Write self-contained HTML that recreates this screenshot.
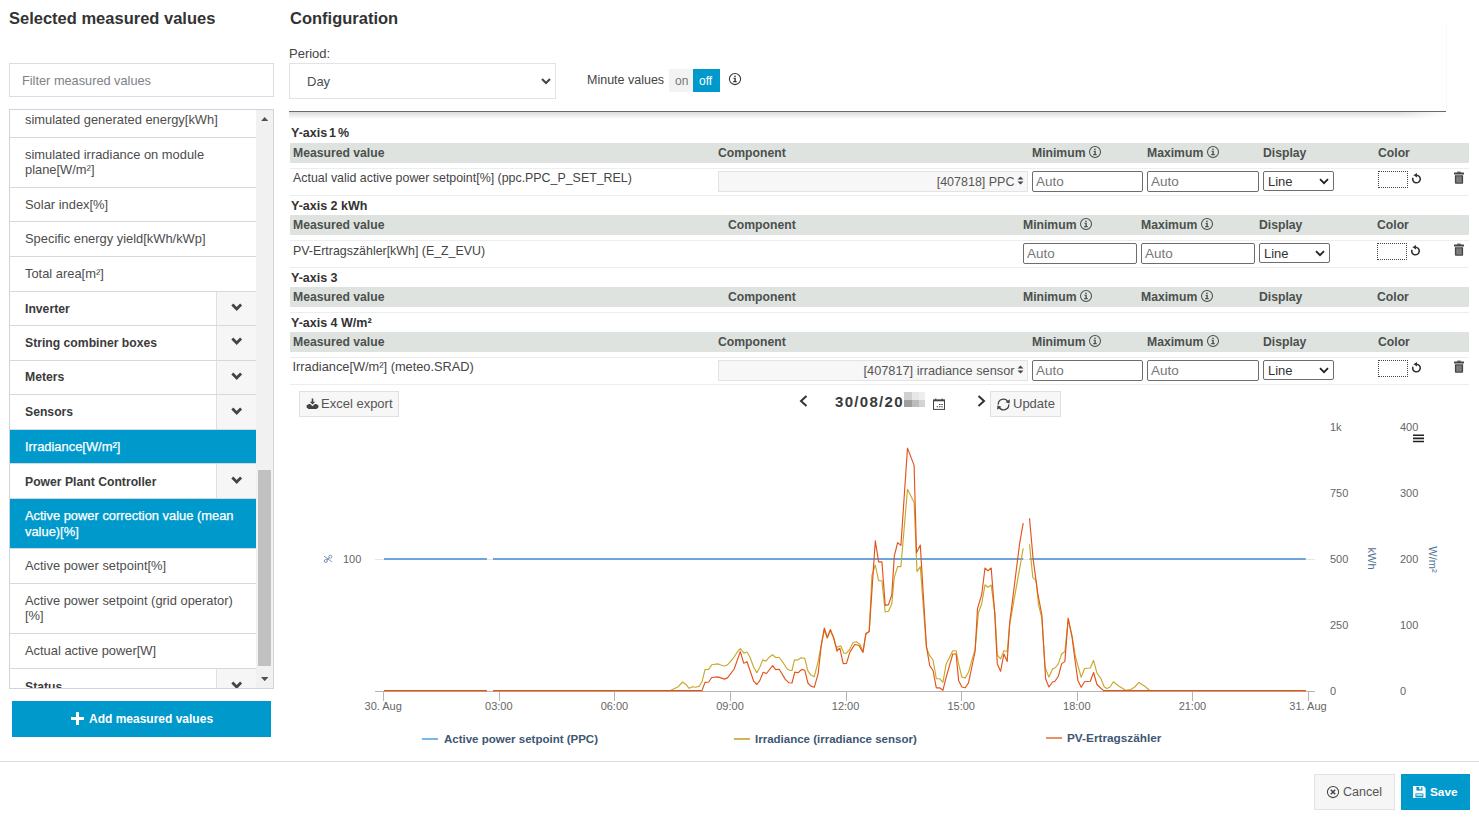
<!DOCTYPE html>
<html><head><meta charset="utf-8">
<style>
*{box-sizing:border-box;margin:0;padding:0}
html,body{width:1479px;height:819px;overflow:hidden;background:#fff}
body{font-family:"Liberation Sans",sans-serif;color:#444;position:relative}
.a{position:absolute;white-space:nowrap}
.t16{font-size:16.5px;font-weight:bold;color:#333;line-height:20px}
.lb{border:1px solid #cdd4db}
.item{position:absolute;left:10px;width:246px;border-bottom:1px solid #d3d9df;font-size:12.5px;color:#4a4a4a}
.item span{position:absolute;left:15px;line-height:16px;white-space:nowrap}
.item.b span{font-weight:bold;color:#3d3d3d}
.item.sel{background:#0099cc;color:#fff;border-bottom-color:#0099cc}
.chev{position:absolute;right:0;top:0;width:40px;bottom:0;border-left:1px solid #d8dde2;background:#f6f6f6}
.chev svg{position:absolute;left:14px;top:13px}
.hdr{position:absolute;left:290px;width:1179px;height:20px;background:#dfe3e0}
.hdr span{position:absolute;top:0;line-height:20px;font-size:12.5px;font-weight:bold;color:#4a4f4c;white-space:nowrap}
.rline{position:absolute;left:290px;width:1179px;height:1px;background:#eceeed}
.ax{font-size:12.5px;font-weight:bold;color:#3a3a3a;line-height:16px}
.cell{font-size:12.5px;color:#444;line-height:16px}
.inp{position:absolute;border:1px solid #6b6b6b;border-radius:2px;background:#fff;height:21px}
.inp span{position:absolute;left:4px;top:2px;font-size:13px;color:#8a8a8a;line-height:16px}
.dsel{position:absolute;border:1px solid #6b6b6b;border-radius:2px;background:#fff;height:20px;width:71px}
.dsel span{position:absolute;left:5px;top:1px;font-size:13px;color:#333;line-height:16px}
.dsel svg{position:absolute;right:8px;top:6px}
.csel{position:absolute;border:1px solid #e2e2e2;background:#f7f7f7;height:21px}
.csel span{position:absolute;right:14px;top:2px;font-size:12.5px;color:#555;line-height:16px}
.csel svg{position:absolute;right:3px;top:5px}
.cbox{position:absolute;width:30px;height:17px;border:1px dotted #333}
.info{position:absolute;width:12px;height:12px}
.lg{font-size:12px;font-weight:bold;color:#3f5773;line-height:16px}
.tk{font-size:11px;color:#666;line-height:13px}
</style></head><body>

<!-- LEFT PANEL -->
<div class="a t16" id="t_left" style="left:9px;top:8px">Selected measured values</div>
<div class="a lb" style="left:9px;top:63px;width:265px;height:34px;border-color:#d9dee2"></div>
<div class="a" id="t_filter" style="left:22px;top:73px;font-size:12.75px;color:#7b8288;line-height:16px">Filter measured values</div>

<div class="a lb" style="left:9px;top:109px;width:265px;height:580px;overflow:hidden">
</div>
<div class="a" style="left:10px;top:110px;width:263px;height:578px;overflow:hidden">
  <div style="position:absolute;left:0;top:0;width:263px;height:578px">
  <div style="position:absolute;left:15px;top:2.23px;font-size:12.9px;color:#4d4d4d;line-height:16px;white-space:nowrap">simulated generated energy[kWh]</div>
<div style="position:absolute;left:15px;top:36.83px;font-size:12.9px;color:#4d4d4d;line-height:16px;white-space:nowrap">simulated irradiance on module</div>
<div style="position:absolute;left:15px;top:52.43px;font-size:12.9px;color:#4d4d4d;line-height:16px;white-space:nowrap">plane[W/m²]</div>
<div style="position:absolute;left:15px;top:86.83px;font-size:12.9px;color:#4d4d4d;line-height:16px;white-space:nowrap">Solar index[%]</div>
<div style="position:absolute;left:15px;top:121.23px;font-size:12.9px;color:#4d4d4d;line-height:16px;white-space:nowrap">Specific energy yield[kWh/kWp]</div>
<div style="position:absolute;left:15px;top:155.73px;font-size:12.9px;color:#4d4d4d;line-height:16px;white-space:nowrap">Total area[m²]</div>
<div style="position:absolute;left:206px;top:181.8px;width:40px;height:33.5px;background:#f6f6f6;border-left:1px solid #dde1e5"></div>
<svg style="position:absolute;left:220.8px;top:193.2px" width="12" height="9" viewBox="0 0 12 9"><path d="M1.3 1.6L5.7 6 10.1 1.6" stroke="#444" stroke-width="2.8" fill="none"/></svg>
<div style="position:absolute;left:15px;top:190.97px;font-size:12.2px;font-weight:bold;color:#3b3b3b;line-height:16px;white-space:nowrap">Inverter</div>
<div style="position:absolute;left:206px;top:215.3px;width:40px;height:34.8px;background:#f6f6f6;border-left:1px solid #dde1e5"></div>
<svg style="position:absolute;left:220.8px;top:227.3px" width="12" height="9" viewBox="0 0 12 9"><path d="M1.3 1.6L5.7 6 10.1 1.6" stroke="#444" stroke-width="2.8" fill="none"/></svg>
<div style="position:absolute;left:15px;top:224.97px;font-size:12.2px;font-weight:bold;color:#3b3b3b;line-height:16px;white-space:nowrap">String combiner boxes</div>
<div style="position:absolute;left:206px;top:250.1px;width:40px;height:34.4px;background:#f6f6f6;border-left:1px solid #dde1e5"></div>
<svg style="position:absolute;left:220.8px;top:261.9px" width="12" height="9" viewBox="0 0 12 9"><path d="M1.3 1.6L5.7 6 10.1 1.6" stroke="#444" stroke-width="2.8" fill="none"/></svg>
<div style="position:absolute;left:15px;top:259.47px;font-size:12.2px;font-weight:bold;color:#3b3b3b;line-height:16px;white-space:nowrap">Meters</div>
<div style="position:absolute;left:206px;top:284.5px;width:40px;height:35.4px;background:#f6f6f6;border-left:1px solid #dde1e5"></div>
<svg style="position:absolute;left:220.8px;top:296.8px" width="12" height="9" viewBox="0 0 12 9"><path d="M1.3 1.6L5.7 6 10.1 1.6" stroke="#444" stroke-width="2.8" fill="none"/></svg>
<div style="position:absolute;left:15px;top:294.37px;font-size:12.2px;font-weight:bold;color:#3b3b3b;line-height:16px;white-space:nowrap">Sensors</div>
<div style="position:absolute;left:0;top:320.4px;width:246px;height:33.9px;background:#0099cc"></div>
<div style="position:absolute;left:15px;top:329.13px;font-size:12.9px;font-weight:normal;-webkit-text-stroke:0.25px #fff;color:#fff;line-height:16px;white-space:nowrap">Irradiance[W/m²]</div>
<div style="position:absolute;left:206px;top:353.8px;width:40px;height:35.0px;background:#f6f6f6;border-left:1px solid #dde1e5"></div>
<svg style="position:absolute;left:220.8px;top:365.9px" width="12" height="9" viewBox="0 0 12 9"><path d="M1.3 1.6L5.7 6 10.1 1.6" stroke="#444" stroke-width="2.8" fill="none"/></svg>
<div style="position:absolute;left:15px;top:363.97px;font-size:12.2px;font-weight:bold;color:#3b3b3b;line-height:16px;white-space:nowrap">Power Plant Controller</div>
<div style="position:absolute;left:0;top:389.3px;width:246px;height:49.2px;background:#0099cc"></div>
<div style="position:absolute;left:15px;top:398.23px;font-size:12.9px;font-weight:normal;-webkit-text-stroke:0.25px #fff;color:#fff;line-height:16px;white-space:nowrap">Active power correction value (mean</div>
<div style="position:absolute;left:15px;top:413.73px;font-size:12.9px;font-weight:normal;-webkit-text-stroke:0.25px #fff;color:#fff;line-height:16px;white-space:nowrap">value)[%]</div>
<div style="position:absolute;left:15px;top:448.03px;font-size:12.9px;color:#4d4d4d;line-height:16px;white-space:nowrap">Active power setpoint[%]</div>
<div style="position:absolute;left:15px;top:482.73px;font-size:12.9px;color:#4d4d4d;line-height:16px;white-space:nowrap">Active power setpoint (grid operator)</div>
<div style="position:absolute;left:15px;top:498.23px;font-size:12.9px;color:#4d4d4d;line-height:16px;white-space:nowrap">[%]</div>
<div style="position:absolute;left:15px;top:532.73px;font-size:12.9px;color:#4d4d4d;line-height:16px;white-space:nowrap">Actual active power[W]</div>
<div style="position:absolute;left:206px;top:558.2px;width:40px;height:35.8px;background:#f6f6f6;border-left:1px solid #dde1e5"></div>
<svg style="position:absolute;left:220.8px;top:570.7px" width="12" height="9" viewBox="0 0 12 9"><path d="M1.3 1.6L5.7 6 10.1 1.6" stroke="#444" stroke-width="2.8" fill="none"/></svg>
<div style="position:absolute;left:15px;top:568.97px;font-size:12.2px;font-weight:bold;color:#3b3b3b;line-height:16px;white-space:nowrap">Status</div>
<div style="position:absolute;left:0;top:27.0px;width:246px;height:1px;background:#d3d9df"></div>
<div style="position:absolute;left:0;top:76.9px;width:246px;height:1px;background:#d3d9df"></div>
<div style="position:absolute;left:0;top:110.7px;width:246px;height:1px;background:#d3d9df"></div>
<div style="position:absolute;left:0;top:146.1px;width:246px;height:1px;background:#d3d9df"></div>
<div style="position:absolute;left:0;top:181.3px;width:246px;height:1px;background:#d3d9df"></div>
<div style="position:absolute;left:0;top:214.8px;width:246px;height:1px;background:#d3d9df"></div>
<div style="position:absolute;left:0;top:249.6px;width:246px;height:1px;background:#d3d9df"></div>
<div style="position:absolute;left:0;top:284.0px;width:246px;height:1px;background:#d3d9df"></div>
<div style="position:absolute;left:0;top:319.4px;width:246px;height:1px;background:#d3d9df"></div>
<div style="position:absolute;left:0;top:353.3px;width:246px;height:1px;background:#d3d9df"></div>
<div style="position:absolute;left:0;top:388.3px;width:246px;height:1px;background:#d3d9df"></div>
<div style="position:absolute;left:0;top:437.5px;width:246px;height:1px;background:#d3d9df"></div>
<div style="position:absolute;left:0;top:472.5px;width:246px;height:1px;background:#d3d9df"></div>
<div style="position:absolute;left:0;top:522.5px;width:246px;height:1px;background:#d3d9df"></div>
<div style="position:absolute;left:0;top:557.7px;width:246px;height:1px;background:#d3d9df"></div>
<div style="position:absolute;left:246px;top:0;width:17px;height:578px;background:#f1f1f1"></div>
<div style="position:absolute;left:248px;top:360px;width:13px;height:196px;background:#c1c1c1"></div>
<svg style="position:absolute;left:250.8px;top:6.8px" width="7.4" height="4.2" viewBox="0 0 7.4 4.2"><path d="M0 4.2L3.7 0 7.4 4.2z" fill="#505050"/></svg>
<svg style="position:absolute;left:250.8px;top:567px" width="7.4" height="4.2" viewBox="0 0 7.4 4.2"><path d="M0 0L3.7 4.2 7.4 0z" fill="#505050"/></svg>
  </div>
</div>

<div class="a" style="left:12px;top:701px;width:259px;height:36px;background:#0099cc"></div>
<svg class="a" style="left:71px;top:712px" width="13" height="13" viewBox="0 0 13 13"><path d="M5 0h3v5h5v3H8v5H5V8H0V5h5z" fill="#fff"/></svg>
<div class="a" id="t_add" style="left:89px;top:711px;font-size:12px;font-weight:bold;color:#fff;line-height:16px">Add measured values</div>

<!-- CONFIG -->
<div class="a t16" id="t_conf" style="left:290px;top:8px">Configuration</div>
<div class="a" id="t_period" style="left:289px;top:46px;font-size:13px;color:#444;line-height:16px">Period:</div>
<div class="a" style="left:289px;top:63px;width:267px;height:36px;border:1px solid #e3e3e3"></div>
<div class="a" id="t_day" style="left:307px;top:74px;font-size:13px;color:#4a5056;line-height:16px">Day</div>
<svg class="a" style="left:541px;top:78px" width="10" height="7" viewBox="0 0 10 7"><path d="M1 1l4 4 4-4" stroke="#3a434e" stroke-width="2" fill="none"/></svg>
<div class="a" id="t_minute" style="left:587px;top:72px;font-size:12.5px;color:#444;line-height:16px">Minute values</div>
<div class="a" style="left:669px;top:69px;width:24px;height:23px;background:#f3f3f3"></div>
<div class="a" style="left:675px;top:73px;font-size:12px;color:#777;line-height:16px">on</div>
<div class="a" style="left:693px;top:69px;width:27px;height:23px;background:#0099cc"></div>
<div class="a" style="left:699px;top:73px;font-size:12px;color:#fff;line-height:16px">off</div>
<svg class="a" style="left:728px;top:71.8px" width="14" height="14" viewBox="-7 -7 14 14"><circle cx="0" cy="0" r="5.6" fill="none" stroke="#333" stroke-width="1.05"/><path d="M-1 -3.3H0.9V-2.2H-1z" fill="#333"/><path d="M-1.5 -1.2H0.8V2.1H1.7V3.2H-1.8V2.1H-0.6V-0.2H-1.5z" fill="#333"/></svg>

<div class="a" style="left:289px;top:112px;width:1157px;height:7px;background:linear-gradient(rgba(0,0,0,.14),rgba(0,0,0,0));-webkit-mask-image:linear-gradient(90deg,#000 96%,transparent)"></div>
<div class="a" style="left:289px;top:111px;width:1157px;height:1px;background:#6a6a6a"></div>

<div class="a" style="left:291px;top:124.67px;font-size:12.5px;font-weight:bold;color:#333;line-height:16px;word-spacing:-1.5px">Y-axis 1 %</div>
<div class="a" style="left:290px;top:143px;width:1179px;height:20px;background:#dfe3e0"></div>
<div class="a" style="left:293px;top:144.97px;font-size:12.2px;font-weight:bold;color:#4b504d;line-height:16px;">Measured value</div>
<div class="a" style="left:718px;top:144.97px;font-size:12.2px;font-weight:bold;color:#4b504d;line-height:16px;">Component</div>
<div class="a" style="left:1032px;top:144.97px;font-size:12.2px;font-weight:bold;color:#4b504d;line-height:16px;">Minimum</div>
<div class="a" style="left:1147px;top:144.97px;font-size:12.2px;font-weight:bold;color:#4b504d;line-height:16px;">Maximum</div>
<div class="a" style="left:1263px;top:144.97px;font-size:12.2px;font-weight:bold;color:#4b504d;line-height:16px;">Display</div>
<div class="a" style="left:1378px;top:144.97px;font-size:12.2px;font-weight:bold;color:#4b504d;line-height:16px;">Color</div>
<svg class="a" style="left:1088px;top:144.7px" width="14" height="14" viewBox="-7 -7 14 14"><circle cx="0" cy="0" r="5.5" fill="none" stroke="#4b504d" stroke-width="1.05"/><path d="M-1 -3.3H0.9V-2.2H-1z" fill="#4b504d"/><path d="M-1.5 -1.2H0.8V2.1H1.7V3.2H-1.8V2.1H-0.6V-0.2H-1.5z" fill="#4b504d"/></svg>
<svg class="a" style="left:1206px;top:144.7px" width="14" height="14" viewBox="-7 -7 14 14"><circle cx="0" cy="0" r="5.5" fill="none" stroke="#4b504d" stroke-width="1.05"/><path d="M-1 -3.3H0.9V-2.2H-1z" fill="#4b504d"/><path d="M-1.5 -1.2H0.8V2.1H1.7V3.2H-1.8V2.1H-0.6V-0.2H-1.5z" fill="#4b504d"/></svg>
<div class="a" style="left:290px;top:168px;width:1179px;height:1px;background:#eceeed"></div>
<div class="a" style="left:290px;top:195px;width:1179px;height:1px;background:#eceeed"></div>
<div class="a" style="left:291px;top:197.67px;font-size:12.5px;font-weight:bold;color:#333;line-height:16px;">Y-axis 2 kWh</div>
<div class="a" style="left:290px;top:215px;width:1179px;height:20px;background:#dfe3e0"></div>
<div class="a" style="left:293px;top:216.97px;font-size:12.2px;font-weight:bold;color:#4b504d;line-height:16px;">Measured value</div>
<div class="a" style="left:728px;top:216.97px;font-size:12.2px;font-weight:bold;color:#4b504d;line-height:16px;">Component</div>
<div class="a" style="left:1023px;top:216.97px;font-size:12.2px;font-weight:bold;color:#4b504d;line-height:16px;">Minimum</div>
<div class="a" style="left:1141px;top:216.97px;font-size:12.2px;font-weight:bold;color:#4b504d;line-height:16px;">Maximum</div>
<div class="a" style="left:1259px;top:216.97px;font-size:12.2px;font-weight:bold;color:#4b504d;line-height:16px;">Display</div>
<div class="a" style="left:1377px;top:216.97px;font-size:12.2px;font-weight:bold;color:#4b504d;line-height:16px;">Color</div>
<svg class="a" style="left:1079px;top:216.7px" width="14" height="14" viewBox="-7 -7 14 14"><circle cx="0" cy="0" r="5.5" fill="none" stroke="#4b504d" stroke-width="1.05"/><path d="M-1 -3.3H0.9V-2.2H-1z" fill="#4b504d"/><path d="M-1.5 -1.2H0.8V2.1H1.7V3.2H-1.8V2.1H-0.6V-0.2H-1.5z" fill="#4b504d"/></svg>
<svg class="a" style="left:1200px;top:216.7px" width="14" height="14" viewBox="-7 -7 14 14"><circle cx="0" cy="0" r="5.5" fill="none" stroke="#4b504d" stroke-width="1.05"/><path d="M-1 -3.3H0.9V-2.2H-1z" fill="#4b504d"/><path d="M-1.5 -1.2H0.8V2.1H1.7V3.2H-1.8V2.1H-0.6V-0.2H-1.5z" fill="#4b504d"/></svg>
<div class="a" style="left:290px;top:240px;width:1179px;height:1px;background:#eceeed"></div>
<div class="a" style="left:290px;top:267px;width:1179px;height:1px;background:#eceeed"></div>
<div class="a" style="left:291px;top:269.67px;font-size:12.5px;font-weight:bold;color:#333;line-height:16px;">Y-axis 3</div>
<div class="a" style="left:290px;top:287px;width:1179px;height:20px;background:#dfe3e0"></div>
<div class="a" style="left:293px;top:288.97px;font-size:12.2px;font-weight:bold;color:#4b504d;line-height:16px;">Measured value</div>
<div class="a" style="left:728px;top:288.97px;font-size:12.2px;font-weight:bold;color:#4b504d;line-height:16px;">Component</div>
<div class="a" style="left:1023px;top:288.97px;font-size:12.2px;font-weight:bold;color:#4b504d;line-height:16px;">Minimum</div>
<div class="a" style="left:1141px;top:288.97px;font-size:12.2px;font-weight:bold;color:#4b504d;line-height:16px;">Maximum</div>
<div class="a" style="left:1259px;top:288.97px;font-size:12.2px;font-weight:bold;color:#4b504d;line-height:16px;">Display</div>
<div class="a" style="left:1377px;top:288.97px;font-size:12.2px;font-weight:bold;color:#4b504d;line-height:16px;">Color</div>
<svg class="a" style="left:1079px;top:288.7px" width="14" height="14" viewBox="-7 -7 14 14"><circle cx="0" cy="0" r="5.5" fill="none" stroke="#4b504d" stroke-width="1.05"/><path d="M-1 -3.3H0.9V-2.2H-1z" fill="#4b504d"/><path d="M-1.5 -1.2H0.8V2.1H1.7V3.2H-1.8V2.1H-0.6V-0.2H-1.5z" fill="#4b504d"/></svg>
<svg class="a" style="left:1200px;top:288.7px" width="14" height="14" viewBox="-7 -7 14 14"><circle cx="0" cy="0" r="5.5" fill="none" stroke="#4b504d" stroke-width="1.05"/><path d="M-1 -3.3H0.9V-2.2H-1z" fill="#4b504d"/><path d="M-1.5 -1.2H0.8V2.1H1.7V3.2H-1.8V2.1H-0.6V-0.2H-1.5z" fill="#4b504d"/></svg>
<div class="a" style="left:290px;top:312px;width:1179px;height:1px;background:#eceeed"></div>
<div class="a" style="left:291px;top:314.67px;font-size:12.5px;font-weight:bold;color:#333;line-height:16px;">Y-axis 4 W/m²</div>
<div class="a" style="left:290px;top:332px;width:1179px;height:20px;background:#dfe3e0"></div>
<div class="a" style="left:293px;top:333.97px;font-size:12.2px;font-weight:bold;color:#4b504d;line-height:16px;">Measured value</div>
<div class="a" style="left:718px;top:333.97px;font-size:12.2px;font-weight:bold;color:#4b504d;line-height:16px;">Component</div>
<div class="a" style="left:1032px;top:333.97px;font-size:12.2px;font-weight:bold;color:#4b504d;line-height:16px;">Minimum</div>
<div class="a" style="left:1147px;top:333.97px;font-size:12.2px;font-weight:bold;color:#4b504d;line-height:16px;">Maximum</div>
<div class="a" style="left:1263px;top:333.97px;font-size:12.2px;font-weight:bold;color:#4b504d;line-height:16px;">Display</div>
<div class="a" style="left:1378px;top:333.97px;font-size:12.2px;font-weight:bold;color:#4b504d;line-height:16px;">Color</div>
<svg class="a" style="left:1088px;top:333.7px" width="14" height="14" viewBox="-7 -7 14 14"><circle cx="0" cy="0" r="5.5" fill="none" stroke="#4b504d" stroke-width="1.05"/><path d="M-1 -3.3H0.9V-2.2H-1z" fill="#4b504d"/><path d="M-1.5 -1.2H0.8V2.1H1.7V3.2H-1.8V2.1H-0.6V-0.2H-1.5z" fill="#4b504d"/></svg>
<svg class="a" style="left:1206px;top:333.7px" width="14" height="14" viewBox="-7 -7 14 14"><circle cx="0" cy="0" r="5.5" fill="none" stroke="#4b504d" stroke-width="1.05"/><path d="M-1 -3.3H0.9V-2.2H-1z" fill="#4b504d"/><path d="M-1.5 -1.2H0.8V2.1H1.7V3.2H-1.8V2.1H-0.6V-0.2H-1.5z" fill="#4b504d"/></svg>
<div class="a" style="left:290px;top:357px;width:1179px;height:1px;background:#eceeed"></div>
<div class="a" style="left:290px;top:384px;width:1179px;height:1px;background:#eceeed"></div>
<div class="a" style="left:293px;top:170.40px;font-size:12.4px;color:#444;line-height:16px;">Actual valid active power setpoint[%] (ppc.PPC_P_SET_REL)</div>
<div class="a" style="left:718px;top:171px;width:310px;height:21px;background:#f7f7f7;border:1px solid #e3e3e3"></div>
<div class="a" style="right:464.5px;top:173.5px;font-size:12.5px;color:#555;line-height:16px;text-align:right">[407818] PPC</div>
<svg class="a" style="left:1017px;top:176px" width="7" height="9" viewBox="0 0 7 9"><path d="M0.5 3.5L3.5 0.5 6.5 3.5zM0.5 5.5L3.5 8.5 6.5 5.5z" fill="#444"/></svg>
<div class="a" style="left:1032px;top:171px;width:111px;height:21px;border:1px solid #6d6d6d;border-radius:2px"></div>
<div class="a" style="left:1036px;top:173.92px;font-size:13.5px;color:#777;line-height:16px;">Auto</div>
<div class="a" style="left:1147px;top:171px;width:112px;height:21px;border:1px solid #6d6d6d;border-radius:2px"></div>
<div class="a" style="left:1151px;top:173.92px;font-size:13.5px;color:#777;line-height:16px;">Auto</div>
<div class="a" style="left:1263px;top:171px;width:71px;height:20px;border:1px solid #6d6d6d;border-radius:2px"></div>
<div class="a" style="left:1268px;top:173.50px;font-size:13px;color:#333;line-height:16px;">Line</div>
<svg class="a" style="left:1319px;top:178px" width="10" height="7" viewBox="0 0 10 7"><path d="M1 1.2l4 4 4-4" stroke="#222" stroke-width="1.8" fill="none"/></svg>
<div class="a" style="left:1378px;top:171px;width:30px;height:17px;border:1px dotted #444"></div>
<svg class="a" style="left:1411px;top:172px" width="11" height="13" viewBox="0 0 11 13"><path d="M5.5 3.2A3.8 3.8 0 1 1 1.9 5.7" stroke="#333" stroke-width="1.6" fill="none"/><path d="M2.4 3.2L6 0.9V5.5z" fill="#333"/></svg>
<svg class="a" style="left:1454px;top:171px" width="10" height="13" viewBox="0 0 10 13"><path d="M3.3 0.6h3.4v1.2H3.3z" fill="#444"/><rect x="0" y="1.6" width="10" height="1.9" rx="0.5" fill="#444"/><path d="M0.9 4.2h8.2v7.6a1 1 0 0 1-1 1H1.9a1 1 0 0 1-1-1z" fill="#444"/><path d="M3.1 5.4v6.2M5 5.4v6.2M6.9 5.4v6.2" stroke="#c8c8c8" stroke-width="0.8"/></svg>
<div class="a" style="left:293px;top:242.80px;font-size:12.4px;color:#444;line-height:16px;">PV-Ertragszähler[kWh] (E_Z_EVU)</div>
<div class="a" style="left:1023px;top:243px;width:114px;height:21px;border:1px solid #6d6d6d;border-radius:2px"></div>
<div class="a" style="left:1027px;top:245.92px;font-size:13.5px;color:#777;line-height:16px;">Auto</div>
<div class="a" style="left:1141px;top:243px;width:114px;height:21px;border:1px solid #6d6d6d;border-radius:2px"></div>
<div class="a" style="left:1145px;top:245.92px;font-size:13.5px;color:#777;line-height:16px;">Auto</div>
<div class="a" style="left:1259px;top:243px;width:71px;height:20px;border:1px solid #6d6d6d;border-radius:2px"></div>
<div class="a" style="left:1264px;top:245.50px;font-size:13px;color:#333;line-height:16px;">Line</div>
<svg class="a" style="left:1315px;top:250px" width="10" height="7" viewBox="0 0 10 7"><path d="M1 1.2l4 4 4-4" stroke="#222" stroke-width="1.8" fill="none"/></svg>
<div class="a" style="left:1377px;top:243px;width:30px;height:17px;border:1px dotted #444"></div>
<svg class="a" style="left:1410px;top:244px" width="11" height="13" viewBox="0 0 11 13"><path d="M5.5 3.2A3.8 3.8 0 1 1 1.9 5.7" stroke="#333" stroke-width="1.6" fill="none"/><path d="M2.4 3.2L6 0.9V5.5z" fill="#333"/></svg>
<svg class="a" style="left:1454px;top:243px" width="10" height="13" viewBox="0 0 10 13"><path d="M3.3 0.6h3.4v1.2H3.3z" fill="#444"/><rect x="0" y="1.6" width="10" height="1.9" rx="0.5" fill="#444"/><path d="M0.9 4.2h8.2v7.6a1 1 0 0 1-1 1H1.9a1 1 0 0 1-1-1z" fill="#444"/><path d="M3.1 5.4v6.2M5 5.4v6.2M6.9 5.4v6.2" stroke="#c8c8c8" stroke-width="0.8"/></svg>
<div class="a" style="left:292.5px;top:359.26px;font-size:12.8px;color:#444;line-height:16px;">Irradiance[W/m²] (meteo.SRAD)</div>
<div class="a" style="left:718px;top:360px;width:310px;height:21px;background:#f7f7f7;border:1px solid #e3e3e3"></div>
<div class="a" style="right:464.5px;top:362.5px;font-size:12.75px;color:#555;line-height:16px;text-align:right">[407817] irradiance sensor</div>
<svg class="a" style="left:1017px;top:365px" width="7" height="9" viewBox="0 0 7 9"><path d="M0.5 3.5L3.5 0.5 6.5 3.5zM0.5 5.5L3.5 8.5 6.5 5.5z" fill="#444"/></svg>
<div class="a" style="left:1032px;top:360px;width:111px;height:21px;border:1px solid #6d6d6d;border-radius:2px"></div>
<div class="a" style="left:1036px;top:362.92px;font-size:13.5px;color:#777;line-height:16px;">Auto</div>
<div class="a" style="left:1147px;top:360px;width:112px;height:21px;border:1px solid #6d6d6d;border-radius:2px"></div>
<div class="a" style="left:1151px;top:362.92px;font-size:13.5px;color:#777;line-height:16px;">Auto</div>
<div class="a" style="left:1263px;top:360px;width:71px;height:20px;border:1px solid #6d6d6d;border-radius:2px"></div>
<div class="a" style="left:1268px;top:362.50px;font-size:13px;color:#333;line-height:16px;">Line</div>
<svg class="a" style="left:1319px;top:367px" width="10" height="7" viewBox="0 0 10 7"><path d="M1 1.2l4 4 4-4" stroke="#222" stroke-width="1.8" fill="none"/></svg>
<div class="a" style="left:1378px;top:360px;width:30px;height:17px;border:1px dotted #444"></div>
<svg class="a" style="left:1411px;top:361px" width="11" height="13" viewBox="0 0 11 13"><path d="M5.5 3.2A3.8 3.8 0 1 1 1.9 5.7" stroke="#333" stroke-width="1.6" fill="none"/><path d="M2.4 3.2L6 0.9V5.5z" fill="#333"/></svg>
<svg class="a" style="left:1454px;top:360px" width="10" height="13" viewBox="0 0 10 13"><path d="M3.3 0.6h3.4v1.2H3.3z" fill="#444"/><rect x="0" y="1.6" width="10" height="1.9" rx="0.5" fill="#444"/><path d="M0.9 4.2h8.2v7.6a1 1 0 0 1-1 1H1.9a1 1 0 0 1-1-1z" fill="#444"/><path d="M3.1 5.4v6.2M5 5.4v6.2M6.9 5.4v6.2" stroke="#c8c8c8" stroke-width="0.8"/></svg>

<div class="a" style="left:1446px;top:22px;width:1px;height:89px;background:#f9f9f9"></div>
<!-- toolbar -->
<div class="a" style="left:299px;top:391px;width:100px;height:26px;background:#f7f7f7;border:1px solid #e0e0e0"></div>
<svg class="a" style="left:306px;top:398px" width="13" height="12" viewBox="0 0 13 12"><path d="M6.5 0.5v5" stroke="#444" stroke-width="1.6"/><path d="M3.8 3.8L6.5 6.6 9.2 3.8z" fill="#444"/><path d="M0.6 7.2L3 6h1.2L6.5 8.2 8.8 6H10l2.4 1.2v2.2L10.5 11h-8L0.6 9.4z" fill="#444"/></svg>
<div class="a" id="t_excel" style="left:321px;top:396px;font-size:13px;color:#555;line-height:16px">Excel export</div>
<svg class="a" style="left:799px;top:395px" width="9" height="12" viewBox="0 0 9 12"><path d="M7.5 1L2 6l5.5 5" stroke="#333" stroke-width="2" fill="none"/></svg>
<div class="a" id="t_date" style="left:835px;top:393px;font-size:15px;font-weight:bold;color:#3a3a3a;line-height:18px;letter-spacing:1.3px">30/08/20</div>
<div class="a" style="left:904px;top:392px;width:8px;height:8px;background:#d0d0d0"></div>
<div class="a" style="left:912px;top:392px;width:7px;height:8px;background:#e7e7e7"></div>
<div class="a" style="left:919px;top:392px;width:6px;height:8px;background:#eeeeee"></div>
<div class="a" style="left:904px;top:400px;width:8px;height:7px;background:#9e9e9e"></div>
<div class="a" style="left:912px;top:400px;width:7px;height:7px;background:#bcbcbc"></div>
<div class="a" style="left:919px;top:400px;width:6px;height:7px;background:#d3d3d3"></div>
<svg class="a" style="left:933px;top:397.8px" width="12" height="12" viewBox="0 0 12 12"><rect x="0.5" y="1.9" width="11" height="9.5" fill="none" stroke="#444" stroke-width="1"/><path d="M0.5 1.9h11v1.4H0.5z" fill="#444"/><path d="M2.2 0.4h1.1v1.8H2.2zM8.7 0.4h1.1v1.8H8.7z" fill="#444"/><path d="M6 6h1.5v1H6zM8.3 6h1.5v1H8.3zM3.7 8.3h1.5v1H3.7zM6 8.3h1.5v1H6zM8.3 8.3h1.5v1H8.3z" fill="#444"/></svg>
<svg class="a" style="left:977px;top:395px" width="9" height="12" viewBox="0 0 9 12"><path d="M1.5 1L7 6l-5.5 5" stroke="#333" stroke-width="2" fill="none"/></svg>
<div class="a" style="left:990px;top:391px;width:71px;height:26px;background:#f7f7f7;border:1px solid #e0e0e0"></div>
<svg class="a" style="left:996.5px;top:397.5px" width="14" height="13" viewBox="0 0 14 13"><path d="M1.3 6.6A5.1 5.1 0 0 1 10.9 3.9" stroke="#444" stroke-width="1.3" fill="none"/><path d="M12.9 1.2L12.6 5.6 8.6 4.3z" fill="#444"/><path d="M11.7 6.4A5.1 5.1 0 0 1 2.1 9.1" stroke="#444" stroke-width="1.3" fill="none"/><path d="M0.1 11.8L0.4 7.4 4.4 8.7z" fill="#444"/></svg>
<div class="a" id="t_upd" style="left:1013px;top:396px;font-size:13px;color:#555;line-height:16px">Update</div>

<!-- <polyline points="384,690.6 486.9,690.6" class="yl"/>
<polyline points="493,690.6 670.3,690.6 674.6,688.5 678.3,686.7 682.5,682.0 686.2,684.8 689.2,688.3 692.3,686.7 695.3,687.3 698.9,686.4 702.0,681.8 705.0,669.6 708.7,669.4 711.7,664.8 717.8,663.9 720.8,665.0 724.5,666.0 727.5,664.8 733.0,658.7 737.3,652.0 740.3,648.7 744.0,653.2 747.0,652.0 750.1,657.5 753.7,667.2 756.8,672.7 759.8,667.2 762.8,659.9 765.9,661.1 769.5,656.9 772.6,654.8 775.6,657.5 779.3,657.5 782.9,662.3 787.2,669.0 790.2,670.5 792.0,670.5 794.5,659.7 797.5,660.1 801.2,657.7 804.8,658.4 807.9,670.8 810.9,675.1 814.3,676.7 818.2,661.1 821.3,644.7 824.3,630.1 827.3,638.2 830.4,630.4 834.0,638.6 837.1,649.6 836.6,647.4 840.7,645.8 844.0,653.2 846.5,653.2 849.8,649.1 853.1,642.5 856.4,641.7 859.7,644.1 863.0,651.5 865.9,634.2 869.2,631.4 872.0,574.9 875.3,565.0 878.6,580.7 881.9,580.7 885.2,612.0 888.5,611.2 891.8,603.7 894.3,577.4 897.6,566.6 900.9,566.6 907.5,489.3 914.1,502.5 917.0,571.6 920.3,566.6 926.4,647.4 929.7,655.7 933.0,659.8 936.3,678.7 939.6,678.7 942.9,682.4 946.2,663.9 952.8,650.7 956.1,650.7 958.6,663.9 961.9,677.1 965.2,677.9 968.5,672.2 975.1,649.1 978.4,612.8 981.7,603.7 985.0,584.8 987.9,587.3 991.2,585.1 994.9,612.8 997.3,654.8 1000.6,659.0 1003.9,650.7 1007.2,651.5 1009.7,624.3 1023.2,548.4" class="yl"/>
<polyline points="1029.5,544.2 1032.8,577.4 1036.1,580.7 1038.5,604.6 1041.8,617.8 1045.1,667.2 1048.9,677.1 1052.6,668.9 1055.0,668.0 1058.3,663.9 1061.6,654.0 1064.9,651.5 1068.2,619.4 1072.1,635.9 1075.4,656.5 1081.2,677.4 1084.5,668.5 1090.3,668.0 1093.6,660.3 1096.9,673.0 1101.0,678.7 1104.3,687.0 1106.8,688.6 1110.1,687.0 1113.4,681.7 1119.1,686.2 1125.7,690.3 1130.7,689.5 1134.8,687.0 1138.9,682.4 1144.7,686.2 1149.6,690.3 1305.8,690.6" class="yl"/>
<polyline points="384,690.6 486.9,690.6" class="or"/>
<polyline points="493,690.6 702.0,690.6 705.0,682.4 708.7,682.0 711.7,677.5 717.8,676.9 720.8,677.9 724.5,679.1 727.5,677.9 734.2,669.0 740.3,651.6 743.7,663.2 747.0,661.7 753.7,681.2 756.8,684.5 759.8,680.6 763.2,672.3 766.5,673.5 772.6,665.7 775.6,669.6 779.3,669.3 785.3,679.4 789.0,682.8 792.0,683.0 794.8,672.1 798.1,672.7 801.8,669.4 804.8,670.2 807.9,683.0 810.9,686.1 814.3,687.3 818.2,673.3 821.3,645.3 824.3,628.0 827.3,637.4 830.4,629.5 833.4,637.4 837.1,651.1 836.6,650.7 839.9,648.3 843.2,663.6 846.5,663.4 849.8,652.4 854.7,644.5 858.8,645.3 863.0,652.4 865.9,633.4 869.2,631.4 875.3,540.8 878.6,561.9 881.9,561.9 885.2,605.4 888.5,604.6 891.8,594.7 894.3,556.1 897.6,542.6 900.9,545.4 907.5,448.1 914.1,465.4 916.5,552.8 920.3,545.1 926.4,645.8 929.7,665.6 933.0,670.5 936.3,687.8 939.6,687.8 942.9,690.3 946.2,677.1 952.8,654.0 956.1,654.0 958.6,680.4 961.9,687.0 965.2,687.8 968.5,682.9 975.1,651.5 977.5,608.7 981.7,594.7 985.0,568.0 987.9,570.8 991.2,568.0 994.9,616.1 997.3,663.9 1000.6,671.3 1003.9,654.0 1007.2,661.4 1009.7,622.7 1019.6,543.7 1023.2,523.1" class="or"/>
<polyline points="1029.5,518.2 1033.1,558.6 1037.7,593.0 1041.8,614.5 1045.6,678.7 1048.9,687.0 1052.6,682.0 1055.0,681.2 1058.3,676.3 1061.6,663.9 1064.9,661.4 1068.2,618.1 1072.1,637.5 1074.6,657.3 1077.9,680.4 1081.2,687.3 1084.5,681.7 1090.3,681.2 1093.6,672.5 1096.9,684.5 1103.5,690.6 1305.8,690.6" class="or"/> -->
<svg class="a" style="left:0;top:0" width="1479" height="819" viewBox="0 0 1479 819">
<style>.yl{fill:none;stroke:#c8a92c;stroke-width:1.15;stroke-linejoin:round}.or{fill:none;stroke:#e2541b;stroke-width:1.15;stroke-linejoin:round}</style>
<line x1="375" y1="559.5" x2="1315" y2="559.5" stroke="#e6e6e6" stroke-width="1"/>
<line x1="375" y1="691.5" x2="1315" y2="691.5" stroke="#b5b5b5" stroke-width="1"/>
<line x1="383.5" y1="691" x2="383.5" y2="701" stroke="#b5b5b5" stroke-width="1"/>
<line x1="499.5" y1="691" x2="499.5" y2="701" stroke="#b5b5b5" stroke-width="1"/>
<line x1="614.5" y1="691" x2="614.5" y2="701" stroke="#b5b5b5" stroke-width="1"/>
<line x1="730.5" y1="691" x2="730.5" y2="701" stroke="#b5b5b5" stroke-width="1"/>
<line x1="846.5" y1="691" x2="846.5" y2="701" stroke="#b5b5b5" stroke-width="1"/>
<line x1="961.5" y1="691" x2="961.5" y2="701" stroke="#b5b5b5" stroke-width="1"/>
<line x1="1077.5" y1="691" x2="1077.5" y2="701" stroke="#b5b5b5" stroke-width="1"/>
<line x1="1192.5" y1="691" x2="1192.5" y2="701" stroke="#b5b5b5" stroke-width="1"/>
<line x1="1308.5" y1="691" x2="1308.5" y2="701" stroke="#b5b5b5" stroke-width="1"/>
<line x1="384" y1="559" x2="486.9" y2="559" stroke="#6ea3dc" stroke-width="2"/>
<line x1="493" y1="559" x2="1023.3" y2="559" stroke="#6ea3dc" stroke-width="2"/>
<line x1="1029.5" y1="559" x2="1305.8" y2="559" stroke="#6ea3dc" stroke-width="2"/>
<polyline points="384,690.6 486.9,690.6" class="yl"/>
<polyline points="493,690.6 670.3,690.6 674.6,688.5 678.3,686.7 682.5,682.0 686.2,684.8 689.2,688.3 692.3,686.7 695.3,687.3 698.9,686.4 702.0,681.8 705.0,669.6 708.7,669.4 711.7,664.8 717.8,663.9 720.8,665.0 724.5,666.0 727.5,664.8 733.0,658.7 737.3,652.0 740.3,648.7 744.0,653.2 747.0,652.0 750.1,657.5 753.7,667.2 756.8,672.7 759.8,667.2 762.8,659.9 765.9,661.1 769.5,656.9 772.6,654.8 775.6,657.5 779.3,657.5 782.9,662.3 787.2,669.0 790.2,670.5 792.0,670.5 794.5,659.7 797.5,660.1 801.2,657.7 804.8,658.4 807.9,670.8 810.9,675.1 814.3,676.7 818.2,661.1 821.3,644.7 824.3,630.1 827.3,638.2 830.4,630.4 834.0,638.6 837.1,649.6 836.6,647.4 840.7,645.8 844.0,653.2 846.5,653.2 849.8,649.1 853.1,642.5 856.4,641.7 859.7,644.1 863.0,651.5 865.9,634.2 869.2,631.4 872.0,574.9 875.3,565.0 878.6,580.7 881.9,580.7 885.2,612.0 888.5,611.2 891.8,603.7 894.3,577.4 897.6,566.6 900.9,566.6 907.5,489.3 914.1,502.5 917.0,571.6 920.3,566.6 926.4,647.4 929.7,655.7 933.0,659.8 936.3,678.7 939.6,678.7 942.9,682.4 946.2,663.9 952.8,650.7 956.1,650.7 958.6,663.9 961.9,677.1 965.2,677.9 968.5,672.2 975.1,649.1 978.4,612.8 981.7,603.7 985.0,584.8 987.9,587.3 991.2,585.1 994.9,612.8 997.3,654.8 1000.6,659.0 1003.9,650.7 1007.2,651.5 1009.7,624.3 1023.2,548.4" class="yl"/>
<polyline points="1029.5,544.2 1032.8,577.4 1036.1,580.7 1038.5,604.6 1041.8,617.8 1045.1,667.2 1048.9,677.1 1052.6,668.9 1055.0,668.0 1058.3,663.9 1061.6,654.0 1064.9,651.5 1068.2,619.4 1072.1,635.9 1075.4,656.5 1081.2,677.4 1084.5,668.5 1090.3,668.0 1093.6,660.3 1096.9,673.0 1101.0,678.7 1104.3,687.0 1106.8,688.6 1110.1,687.0 1113.4,681.7 1119.1,686.2 1125.7,690.3 1130.7,689.5 1134.8,687.0 1138.9,682.4 1144.7,686.2 1149.6,690.3 1305.8,690.6" class="yl"/>
<polyline points="384,690.6 486.9,690.6" class="or"/>
<polyline points="493,690.6 702.0,690.6 705.0,682.4 708.7,682.0 711.7,677.5 717.8,676.9 720.8,677.9 724.5,679.1 727.5,677.9 734.2,669.0 740.3,651.6 743.7,663.2 747.0,661.7 753.7,681.2 756.8,684.5 759.8,680.6 763.2,672.3 766.5,673.5 772.6,665.7 775.6,669.6 779.3,669.3 785.3,679.4 789.0,682.8 792.0,683.0 794.8,672.1 798.1,672.7 801.8,669.4 804.8,670.2 807.9,683.0 810.9,686.1 814.3,687.3 818.2,673.3 821.3,645.3 824.3,628.0 827.3,637.4 830.4,629.5 833.4,637.4 837.1,651.1 836.6,650.7 839.9,648.3 843.2,663.6 846.5,663.4 849.8,652.4 854.7,644.5 858.8,645.3 863.0,652.4 865.9,633.4 869.2,631.4 875.3,540.8 878.6,561.9 881.9,561.9 885.2,605.4 888.5,604.6 891.8,594.7 894.3,556.1 897.6,542.6 900.9,545.4 907.5,448.1 914.1,465.4 916.5,552.8 920.3,545.1 926.4,645.8 929.7,665.6 933.0,670.5 936.3,687.8 939.6,687.8 942.9,690.3 946.2,677.1 952.8,654.0 956.1,654.0 958.6,680.4 961.9,687.0 965.2,687.8 968.5,682.9 975.1,651.5 977.5,608.7 981.7,594.7 985.0,568.0 987.9,570.8 991.2,568.0 994.9,616.1 997.3,663.9 1000.6,671.3 1003.9,654.0 1007.2,661.4 1009.7,622.7 1019.6,543.7 1023.2,523.1" class="or"/>
<polyline points="1029.5,518.2 1033.1,558.6 1037.7,593.0 1041.8,614.5 1045.6,678.7 1048.9,687.0 1052.6,682.0 1055.0,681.2 1058.3,676.3 1061.6,663.9 1064.9,661.4 1068.2,618.1 1072.1,637.5 1074.6,657.3 1077.9,680.4 1081.2,687.3 1084.5,681.7 1090.3,681.2 1093.6,672.5 1096.9,684.5 1103.5,690.6 1305.8,690.6" class="or"/>
</svg>
<div class="a tk" style="left:333.2px;width:100px;text-align:center;top:699.5px">30. Aug</div>
<div class="a tk" style="left:448.8px;width:100px;text-align:center;top:699.5px">03:00</div>
<div class="a tk" style="left:564.4px;width:100px;text-align:center;top:699.5px">06:00</div>
<div class="a tk" style="left:680.0px;width:100px;text-align:center;top:699.5px">09:00</div>
<div class="a tk" style="left:795.6px;width:100px;text-align:center;top:699.5px">12:00</div>
<div class="a tk" style="left:911.2px;width:100px;text-align:center;top:699.5px">15:00</div>
<div class="a tk" style="left:1026.8px;width:100px;text-align:center;top:699.5px">18:00</div>
<div class="a tk" style="left:1142.4px;width:100px;text-align:center;top:699.5px">21:00</div>
<div class="a tk" style="left:1258.0px;width:100px;text-align:center;top:699.5px">31. Aug</div>
<div class="a tk" style="left:1330px;top:421.3px">1k</div>
<div class="a tk" style="left:1330px;top:487.3px">750</div>
<div class="a tk" style="left:1330px;top:553.3px">500</div>
<div class="a tk" style="left:1330px;top:619.3px">250</div>
<div class="a tk" style="left:1330px;top:685.3px">0</div>
<div class="a tk" style="left:1400px;top:421.3px">400</div>
<div class="a tk" style="left:1400px;top:487.3px">300</div>
<div class="a tk" style="left:1400px;top:553.3px">200</div>
<div class="a tk" style="left:1400px;top:619.3px">100</div>
<div class="a tk" style="left:1400px;top:685.3px">0</div>
<div class="a tk" style="left:343px;top:553.3px">100</div>
<svg class="a" style="left:322px;top:554px" width="11" height="10" viewBox="0 0 11 10"><circle cx="8.3" cy="2.7" r="1.5" fill="none" stroke="#7b93b3" stroke-width="1"/><circle cx="3.8" cy="7" r="1.5" fill="none" stroke="#7b93b3" stroke-width="1"/><path d="M2 2.1L9.8 7.8M5 5.9L7.2 3.8" stroke="#7b93b3" stroke-width="1"/></svg>
<div class="a" style="left:1351px;top:552px;width:40px;text-align:center;font-size:11px;color:#4f6f95;line-height:13px;transform:rotate(90deg)">kWh</div>
<div class="a" style="left:1412px;top:552.5px;width:40px;text-align:center;font-size:11px;color:#4f6f95;line-height:13px;transform:rotate(90deg)">W/m²</div>
<svg class="a" style="left:1413px;top:434px" width="11" height="9" viewBox="0 0 11 9"><path d="M0 0.5h11v1.6H0zM0 3.6h11v1.6H0zM0 6.7h11v1.6H0z" fill="#222"/></svg>
<div class="a" style="left:422px;top:738px;width:16px;height:2px;background:#7cb5ec"></div>
<div class="a" style="left:444px;top:731.32px;font-size:11.5px;font-weight:bold;color:#3e5673;line-height:16px;">Active power setpoint (PPC)</div>
<div class="a" style="left:734px;top:738px;width:16px;height:2px;background:#d1b35a"></div>
<div class="a" style="left:755px;top:731.32px;font-size:11.5px;font-weight:bold;color:#3e5673;line-height:16px;">Irradiance (irradiance sensor)</div>
<div class="a" style="left:1046px;top:737px;width:16px;height:2px;background:#ea9068"></div>
<div class="a" style="left:1067px;top:730.21px;font-size:11.8px;font-weight:bold;color:#3e5673;line-height:16px;">PV-Ertragszähler</div>

<div class="a" style="left:0;top:761px;width:1479px;height:1px;background:#dedede"></div>
<div class="a" style="left:1314px;top:774px;width:81px;height:36px;background:#f6f6f6;border:1px solid #e2e2e2"></div>
<svg class="a" style="left:1326px;top:785px" width="14" height="14" viewBox="-7 -7 14 14"><circle r="5.6" fill="none" stroke="#444" stroke-width="1.05"/><path d="M-2.2 -2.2L2.2 2.2M2.2 -2.2L-2.2 2.2" stroke="#444" stroke-width="1.5"/></svg>
<div class="a" id="t_cancel" style="left:1343px;top:784px;font-size:12.5px;color:#555;line-height:16px">Cancel</div>
<div class="a" style="left:1401px;top:774px;width:69px;height:36px;background:#0099cc"></div>
<svg class="a" style="left:1413.3px;top:785.7px" width="13" height="12.3" viewBox="0 0 13 12.3"><path d="M0 0h10.5L12.6 2.1V12.3H0z" fill="#fff"/><path d="M3.4 1h6v3.6h-6z" fill="#0099cc"/><path d="M6.3 1h2v2.4h-2z" fill="#fff"/><path d="M2.4 7.4h8v4h-8z" fill="#0099cc"/><path d="M3.3 8.3h6.2v1.3H3.3z" fill="#fff"/></svg>
<div class="a" id="t_save" style="left:1430px;top:784px;font-size:11.8px;font-weight:bold;color:#fff;line-height:16px">Save</div>
</body></html>
